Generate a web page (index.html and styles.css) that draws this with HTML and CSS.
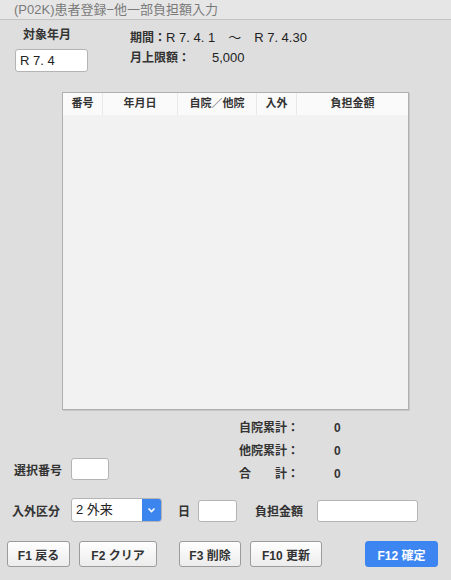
FILE: index.html
```html
<!DOCTYPE html>
<html lang="ja">
<head>
    <meta charset="UTF-8">
    <title>(P02K)患者登録−他一部負担額入力</title>
    <link rel="stylesheet" href="styles.css">
</head>
<body>

    <div class="titlebar">(P02K)患者登録−他一部負担額入力</div>

    <div class="top">
        <div class="target">
            <div class="label target-label">対象年月</div>
            <div class="field target-field">R 7. 4</div>
        </div>
        <div class="period">
            <div class="line"><b>期間：</b>R 7. 4. 1　～　R 7. 4.30</div>
            <div class="line"><b>月上限額：</b><span class="limit">5,000</span></div>
        </div>
    </div>

    <div class="table">
        <div class="thead">
            <div class="th c1">番号</div>
            <div class="th c2">年月日</div>
            <div class="th c3">自院／他院</div>
            <div class="th c4">入外</div>
            <div class="th c5">負担金額</div>
        </div>
    </div>

    <div class="mid">
        <div class="select-no">
            <span class="label">選択番号</span>
            <div class="field no-field"></div>
        </div>
        <div class="summary">
            <div class="sum-row"><span class="sum-label">自院累計：</span><span>0</span></div>
            <div class="sum-row"><span class="sum-label">他院累計：</span><span>0</span></div>
            <div class="sum-row"><span class="sum-label">合　　計：</span><span>0</span></div>
        </div>
    </div>

    <div class="entry">
        <span class="label">入外区分</span>
        <div class="select">
            <span class="select-text">2 外来</span>
            <span class="select-arrow">
                <svg width="9" height="6" viewBox="0 0 9 6"><path d="M1.5 1.5 L4.5 4.5 L7.5 1.5" fill="none" stroke="#fff" stroke-width="1.6"/></svg>
            </span>
        </div>
        <span class="label day-label">日</span>
        <div class="field day-field"></div>
        <span class="label amount-label">負担金額</span>
        <div class="field amount-field"></div>
    </div>

    <div class="buttons">
        <button class="btn b1">F1 戻る</button>
        <button class="btn b2">F2 クリア</button>
        <button class="btn b3">F3 削除</button>
        <button class="btn b10">F10 更新</button>
        <button class="btn primary">F12 確定</button>
    </div>

</body>
</html>
```

FILE: styles.css
```css
body {
    margin: 0;
    width: 451px;
    height: 580px;
    background: #dedede;
    font-family: "Liberation Sans", "Noto Sans CJK JP", sans-serif;
    font-size: 12px;
    color: #333;
    overflow: hidden;
}
.titlebar {
    height: 20px;
    line-height: 19px;
    padding-left: 14px;
    font-size: 13px;
    color: #7a7a7a;
    background: #e6e6e6;
    border-bottom: 1px solid #c4c4c4;
    box-sizing: border-box;
}
.label {
    font-weight: bold;
    color: #333;
}
.field {
    background: #fff;
    border: 1px solid #b4b4b4;
    border-radius: 3px;
    box-sizing: border-box;
}
.top {
    display: flex;
    padding: 7px 0 0 15px;
}
.target {
    width: 73px;
}
.target-label {
    line-height: 16px;
    padding-left: 8px;
}
.target-field {
    margin-top: 6px;
    height: 23px;
    line-height: 21px;
    padding-left: 4px;
    font-size: 13px;
    color: #222;
}
.period {
    margin-left: 42px;
    padding-top: 1px;
    font-size: 13px;
    color: #222;
}
.period b {
    font-size: 12px;
    color: #333;
}
.line {
    line-height: 20px;
}
.limit {
    margin-left: 22px;
}
.table {
    margin: 20px 0 0 62px;
    width: 347px;
    height: 318px;
    background: #f2f2f2;
    border: 1px solid #b0b0b0;
    box-sizing: border-box;
    box-shadow: 1px 1px 0 #c8c8c8;
}
.thead {
    display: flex;
    height: 22px;
    background: #fafafa;
}
.th {
    line-height: 21px;
    text-align: center;
    font-weight: bold;
    font-size: 11px;
    border-right: 1px solid #e8e8e8;
    box-sizing: border-box;
}
.c1 { width: 40px; }
.c2 { width: 75px; }
.c3 { width: 79px; }
.c4 { width: 40px; }
.c5 { flex: 1; border-right: none; }
.mid {
    display: flex;
    margin-top: 7px;
}
.select-no {
    display: flex;
    align-items: center;
    margin: 41px 0 0 14px;
    height: 22px;
}
.no-field {
    margin-left: 9px;
    width: 38px;
    height: 22px;
}
.summary {
    margin-left: 130px;
    font-weight: bold;
}
.sum-row {
    display: flex;
    line-height: 23px;
}
.sum-label {
    width: 95px;
}
.entry {
    display: flex;
    align-items: center;
    margin-top: 12px;
    padding-left: 12px;
    height: 24px;
}
.select {
    display: flex;
    margin-left: 11px;
    width: 91px;
    height: 24px;
    background: #fff;
    border: 1px solid #b4b4b4;
    border-radius: 3px;
    box-sizing: border-box;
    overflow: hidden;
}
.select-text {
    flex: 1;
    line-height: 22px;
    padding-left: 4px;
    font-size: 13px;
    color: #222;
}
.select-arrow {
    width: 19px;
    display: flex;
    align-items: center;
    justify-content: center;
    background: #3c85ef;
}
.day-label {
    margin-left: 16px;
}
.day-field {
    margin: 2px 0 0 8px;
    width: 39px;
    height: 22px;
}
.amount-label {
    margin-left: 18px;
}
.amount-field {
    margin: 2px 0 0 14px;
    width: 101px;
    height: 22px;
}
.buttons {
    display: flex;
    margin-top: 19px;
    padding-left: 7px;
}
.btn {
    height: 26px;
    padding: 0;
    font-family: inherit;
    font-size: 12px;
    font-weight: bold;
    color: #333;
    background: linear-gradient(#ffffff, #ececec);
    border: 1px solid #9c9c9c;
    border-radius: 3px;
}
.b1 { width: 63px; }
.b2 { width: 78px; margin-left: 9px; }
.b3 { width: 62px; margin-left: 22px; }
.b10 { width: 72px; margin-left: 9px; }
.primary {
    width: 73px;
    margin-left: 43px;
    color: #fff;
    background: #3d86f1;
    border-color: #3d86f1;
}
```
